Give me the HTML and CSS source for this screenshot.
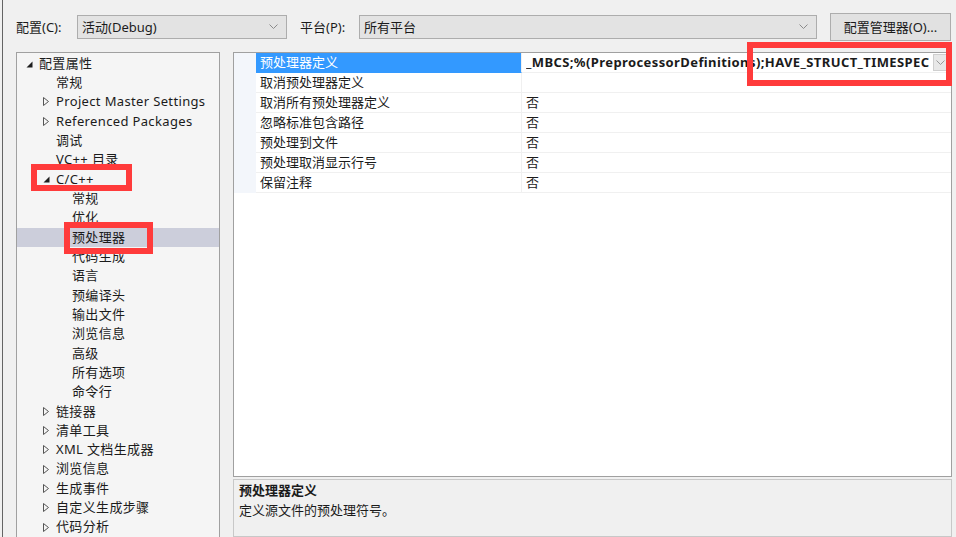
FILE: index.html
```html
<!DOCTYPE html>
<html lang="zh-CN">
<head>
<meta charset="utf-8">
<title>属性页</title>
<link rel="stylesheet" href="styles.css">
</head>
<body>
<div class="frame">
  <div class="topbar">
    <span class="lbl lbl1">配置(C):</span>
    <div class="combo combo1"><span>活动(Debug)</span><svg class="chev" width="9" height="6" viewBox="0 0 9 6"><polyline points="0.5,0.5 4.5,4.5 8.5,0.5" fill="none" stroke="#8a8a8a" stroke-width="1"/></svg></div>
    <span class="lbl lbl2">平台(P):</span>
    <div class="combo combo2"><span>所有平台</span><svg class="chev" width="9" height="6" viewBox="0 0 9 6"><polyline points="0.5,0.5 4.5,4.5 8.5,0.5" fill="none" stroke="#8a8a8a" stroke-width="1"/></svg></div>
    <div class="btn">配置管理器(O)...</div>
  </div>
  <div class="main">
    <div class="tree">
      <div class="row l0"><span class="arr"><svg width="7" height="7" viewBox="0 0 7 7"><polygon points="6.5,0.5 6.5,6.5 0.5,6.5" fill="#1e1e1e"/></svg></span>配置属性</div>
      <div class="row l1"><span class="arr"></span>常规</div>
      <div class="row l1"><span class="arr"><svg width="6" height="9" viewBox="0 0 6 9"><polygon points="0.5,0.5 5.5,4.5 0.5,8.5" fill="none" stroke="#555" stroke-width="1"/></svg></span>Project Master Settings</div>
      <div class="row l1"><span class="arr"><svg width="6" height="9" viewBox="0 0 6 9"><polygon points="0.5,0.5 5.5,4.5 0.5,8.5" fill="none" stroke="#555" stroke-width="1"/></svg></span>Referenced Packages</div>
      <div class="row l1"><span class="arr"></span>调试</div>
      <div class="row l1"><span class="arr"></span>VC++ 目录</div>
      <div class="row l1"><span class="arr"><svg width="7" height="7" viewBox="0 0 7 7"><polygon points="6.5,0.5 6.5,6.5 0.5,6.5" fill="#1e1e1e"/></svg></span>C/C++</div>
      <div class="row l2"><span class="arr"></span>常规</div>
      <div class="row l2"><span class="arr"></span>优化</div>
      <div class="row l2 sel"><span class="arr"></span>预处理器</div>
      <div class="row l2"><span class="arr"></span>代码生成</div>
      <div class="row l2"><span class="arr"></span>语言</div>
      <div class="row l2"><span class="arr"></span>预编译头</div>
      <div class="row l2"><span class="arr"></span>输出文件</div>
      <div class="row l2"><span class="arr"></span>浏览信息</div>
      <div class="row l2"><span class="arr"></span>高级</div>
      <div class="row l2"><span class="arr"></span>所有选项</div>
      <div class="row l2"><span class="arr"></span>命令行</div>
      <div class="row l1"><span class="arr"><svg width="6" height="9" viewBox="0 0 6 9"><polygon points="0.5,0.5 5.5,4.5 0.5,8.5" fill="none" stroke="#555" stroke-width="1"/></svg></span>链接器</div>
      <div class="row l1"><span class="arr"><svg width="6" height="9" viewBox="0 0 6 9"><polygon points="0.5,0.5 5.5,4.5 0.5,8.5" fill="none" stroke="#555" stroke-width="1"/></svg></span>清单工具</div>
      <div class="row l1"><span class="arr"><svg width="6" height="9" viewBox="0 0 6 9"><polygon points="0.5,0.5 5.5,4.5 0.5,8.5" fill="none" stroke="#555" stroke-width="1"/></svg></span>XML 文档生成器</div>
      <div class="row l1"><span class="arr"><svg width="6" height="9" viewBox="0 0 6 9"><polygon points="0.5,0.5 5.5,4.5 0.5,8.5" fill="none" stroke="#555" stroke-width="1"/></svg></span>浏览信息</div>
      <div class="row l1"><span class="arr"><svg width="6" height="9" viewBox="0 0 6 9"><polygon points="0.5,0.5 5.5,4.5 0.5,8.5" fill="none" stroke="#555" stroke-width="1"/></svg></span>生成事件</div>
      <div class="row l1"><span class="arr"><svg width="6" height="9" viewBox="0 0 6 9"><polygon points="0.5,0.5 5.5,4.5 0.5,8.5" fill="none" stroke="#555" stroke-width="1"/></svg></span>自定义生成步骤</div>
      <div class="row l1"><span class="arr"><svg width="6" height="9" viewBox="0 0 6 9"><polygon points="0.5,0.5 5.5,4.5 0.5,8.5" fill="none" stroke="#555" stroke-width="1"/></svg></span>代码分析</div>
    </div>
    <div class="right">
      <div class="grid">
        <div class="prow">
          <div class="gut"></div>
          <div class="pname psel">预处理器定义</div>
          <div class="pval bold"><span class="vtext">_MBCS;%(PreprocessorDefinitions);HAVE_STRUCT_TIMESPEC</span><span class="dd"><svg width="9" height="6" viewBox="0 0 9 6"><polyline points="0.5,0.5 4.5,4.5 8.5,0.5" fill="none" stroke="#9a9a9a" stroke-width="1"/></svg></span></div>
        </div>
        <div class="prow"><div class="gut"></div><div class="pname">取消预处理器定义</div><div class="pval"></div></div>
        <div class="prow"><div class="gut"></div><div class="pname">取消所有预处理器定义</div><div class="pval">否</div></div>
        <div class="prow"><div class="gut"></div><div class="pname">忽略标准包含路径</div><div class="pval">否</div></div>
        <div class="prow"><div class="gut"></div><div class="pname">预处理到文件</div><div class="pval">否</div></div>
        <div class="prow"><div class="gut"></div><div class="pname">预处理取消显示行号</div><div class="pval">否</div></div>
        <div class="prow"><div class="gut"></div><div class="pname">保留注释</div><div class="pval">否</div></div>
      </div>
      <div class="desc">
        <div class="dtitle">预处理器定义</div>
        <div class="dtext">定义源文件的预处理符号。</div>
      </div>
    </div>
  </div>
</div>
<div class="mark mark1"></div>
<div class="mark mark2"></div>
<div class="mark mark3"></div>
</body>
</html>
```
FILE: styles.css
```css
html, body {
  margin: 0;
  padding: 0;
}
body {
  width: 956px;
  height: 537px;
  overflow: hidden;
  background: #f0f0f0;
  font-family: "Noto Sans", "Noto Sans CJK SC", sans-serif;
  font-size: 13px;
  color: #1b1b1b;
  position: relative;
}
.frame {
  margin-left: 2px;
  border-left: 1px solid #646464;
  height: 537px;
}
.topbar {
  height: 52px;
  box-sizing: border-box;
  padding: 13px 0 0 13px;
  display: flex;
  align-items: flex-start;
}
.lbl {
  display: block;
  height: 28px;
  line-height: 28px;
  white-space: nowrap;
}
.lbl1 { width: 61px; }
.lbl2 { width: 59px; margin-left: 13px; }
.combo {
  margin-top: 2px;
  height: 24px;
  box-sizing: border-box;
  border: 1px solid #adadad;
  background: #e3e3e3;
  display: flex;
  align-items: center;
  justify-content: space-between;
  padding: 0 8px 0 4px;
  line-height: 22px;
}
.combo1 { width: 210px; }
.combo2 { width: 458px; }
.btn {
  margin-left: 13px;
  width: 121px;
  height: 28px;
  box-sizing: border-box;
  border: 1px solid #adadad;
  background: #e1e1e1;
  text-align: center;
  line-height: 26px;
}
.main {
  display: flex;
  padding-left: 13px;
  gap: 13px;
  height: 485px;
}
.tree {
  width: 204px;
  height: 500px;
  box-sizing: border-box;
  border: 1px solid #a0a0a0;
  background: #f5f5f5;
  padding-top: 0.6px;
  flex: none;
  letter-spacing: 0.35px;
}
.row {
  height: 19.33px;
  line-height: 19.33px;
  display: flex;
  align-items: center;
  white-space: nowrap;
}
.row.sel { background: #cccedb; }
.arr {
  width: 13px;
  flex: none;
  display: flex;
  align-items: center;
}
.arr svg { display: block; }
.l0 { padding-left: 9px; }
.l1 { padding-left: 26px; }
.l2 { padding-left: 42px; }
.l0 .arr svg { margin-top: 2px; }
.right {
  width: 719px;
  display: flex;
  flex-direction: column;
  gap: 2px;
  flex: none;
}
.grid {
  height: 441px;
  box-sizing: border-box;
  border: 1px solid #a0a0a0;
  background: #fff;
}
.prow {
  display: flex;
  height: 20px;
}
.gut {
  width: 22px;
  flex: none;
  background: #f3f6fb;
}
.pname {
  width: 266px;
  flex: none;
  box-sizing: border-box;
  padding-left: 4px;
  line-height: 19px;
  height: 20px;
  border-bottom: 1px solid #f0f0f0;
  border-right: 1px solid #f0f0f0;
  white-space: nowrap;
}
.pname.psel {
  background: #3399ff;
  color: #fff;
  border-bottom-color: #3399ff;
}
.pval {
  flex: 1;
  min-width: 0;
  box-sizing: border-box;
  padding-left: 4px;
  height: 20px;
  line-height: 19px;
  border-bottom: 1px solid #f0f0f0;
  display: flex;
  align-items: flex-start;
  white-space: nowrap;
}
.pval.bold {
  font-weight: bold;
  letter-spacing: 0.4px;
}
.vtext {
  flex: 1;
  min-width: 0;
  overflow: hidden;
}
.dd {
  flex: none;
  width: 15px;
  height: 17px;
  margin: 1px 3px 0 2px;
  box-sizing: border-box;
  border: 1px solid #cfcfcf;
  background: #e8e8e8;
  display: flex;
  align-items: center;
  justify-content: center;
}
.desc {
  height: 60px;
  box-sizing: border-box;
  border: 1px solid #c8c8c8;
  background: #f0f0f0;
  padding: 1px 0 0 5px;
}
.dtitle {
  font-weight: bold;
  line-height: 19px;
}
.dtext {
  line-height: 20px;
}
.mark {
  position: absolute;
  border: 6px solid #ff3b3b;
  box-sizing: border-box;
}
.mark1 { left: 31px; top: 164px; width: 101px; height: 27px; }
.mark2 { left: 64px; top: 222px; width: 89px; height: 32px; }
.mark3 { left: 747px; top: 42px; width: 205px; height: 44px; }
```
